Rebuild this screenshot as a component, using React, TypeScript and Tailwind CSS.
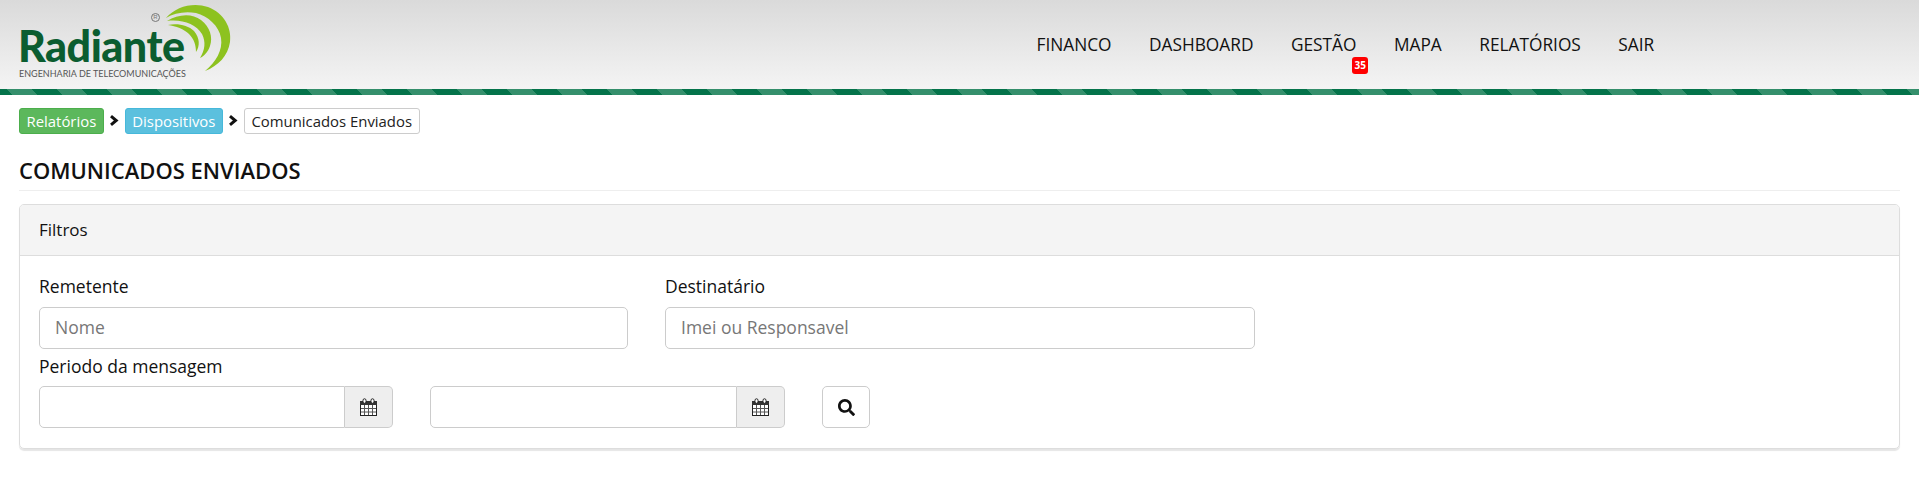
import { FaSearch } from "react-icons/fa";

function Cal() {
  return (
    <svg width="17" height="18" viewBox="0 0 17 18" className="block">
      <rect x="0.5" y="3.5" width="16" height="14" fill="#fff" stroke="#222" />
      <rect x="0" y="3" width="17" height="4" fill="#333" />
      <rect x="3" y="0.8" width="3" height="4.5" rx="1.5" fill="#fff" stroke="#222" />
      <rect x="11" y="0.8" width="3" height="4.5" rx="1.5" fill="#fff" stroke="#222" />
      <path d="M4.5 7v10M8.5 7v10M12.5 7v10M1 10.5h15M1 14h15" stroke="#555" strokeWidth="1" fill="none" />
    </svg>
  );
}

function Chevron() {
  return (
    <svg width="10" height="11" viewBox="0 0 10 11" className="block mb-[2px] shrink-0 mx-[5.5px]">
      <path d="M2 1.2 L7.2 5.5 L2 9.8" fill="none" stroke="#111" strokeWidth="3" />
    </svg>
  );
}

function Logo() {
  return (
    <div className="relative w-[240px] h-[89px] shrink-0">
      <svg width="90" height="80" viewBox="0 0 90 80" className="absolute left-[150px] top-0">
        <path d="M16 18 C26 6 44 2 58 7 C74 13 82 28 80 42 C78 56 68 66 55 71 C66 62 73 50 71 38 C69 26 58 16 46 13 C35 11 24 13 16 18Z" fill="#8dc21f" />
        <path d="M17 21 C28 14 42 13 51 20 C60 27 63 37 60 46 C58 52 54 56 50 58 C55 50 56 42 52 34 C46 24 32 19 17 21Z" fill="#8dc21f" />
        <path d="M18 25 C27 23 38 25 44 31 C50 38 50 46 46 52 C46 45 44 39 39 34 C34 29 26 26 18 25 Z" fill="#8dc21f" />
      </svg>
      <span className="absolute left-[18px] top-[26px] font-['Lato',sans-serif] font-black text-[43px] leading-[40px] tracking-[-0.5px] text-[#0b5d30]">Radiante</span>
      <span className="absolute left-[19px] top-[68px] font-['Lato',sans-serif] text-[9px] leading-[11px] whitespace-nowrap text-[#555]">ENGENHARIA DE TELECOMUNICAÇÕES</span>
      <span className="absolute left-[151px] top-[13px] w-[9px] h-[9px] rounded-full border border-[#777] text-[6px] leading-[7px] text-center text-[#777] font-['Liberation_Sans',sans-serif]">R</span>
    </div>
  );
}

const nav = ["FINANCO", "DASHBOARD", "GESTÃO", "MAPA", "RELATÓRIOS", "SAIR"];

export default function App() {
  return (
    <div className="min-h-[490px] bg-white font-['Open_Sans',sans-serif] text-[#111]">
      <header className="h-[95px] flex flex-col">
        <div className="h-[89px] flex items-start justify-between bg-gradient-to-b from-[#dadada] to-[#f4f4f4] pr-[246px]">
          <Logo />
          <nav className="flex pt-[33px]">
            {nav.map((n) => (
              <div key={n} className="relative px-[18.75px] text-[17.3px] leading-[24px] text-[#111]">
                {n}
                {n === "GESTÃO" && (
                  <span className="absolute right-[7px] top-[24px] w-[16px] h-[17px] rounded-[3px] bg-[#f00] text-white text-[10px] leading-[17px] text-center font-bold">35</span>
                )}
              </div>
            ))}
          </nav>
        </div>
        <div className="h-[6px] bg-[repeating-linear-gradient(50deg,#04734a_0,#04734a_9.26px,#358f6c_9.26px,#358f6c_28.41px,#04734a_28.41px,#04734a_38.3px)]" />
      </header>

      <main className="px-[19px] pt-[13px]">
        <div className="flex items-center h-[26px] text-[14.9px]">
          <span className="h-[26px] px-[6.5px] rounded-[3px] border border-[#4cae4c] bg-[#5cb85c] text-white leading-[24px]">Relatórios</span>
          <Chevron />
          <span className="h-[26px] px-[6.5px] rounded-[3px] border border-[#46b8da] bg-[#5bc0de] text-white leading-[24px]">Dispositivos</span>
          <Chevron />
          <span className="h-[26px] px-[6.5px] rounded-[3px] border border-[#ccc] bg-white text-[#222] leading-[24px]">Comunicados Enviados</span>
        </div>

        <h1 className="mt-[22px] h-[35px] text-[22px] leading-[29px] font-semibold border-b border-[#eee] text-[#111]">COMUNICADOS ENVIADOS</h1>

        <section className="mt-[13px] h-[245px] rounded-[5px] border border-[#ddd] shadow-[0_2px_1px_rgba(0,0,0,0.1)]">
          <div className="h-[51px] px-[19px] flex items-center bg-[#f4f4f4] border-b border-[#ddd] rounded-t-[4px] text-[17px]">Filtros</div>
          <div className="px-[19px] pt-[19px]">
            <div className="flex gap-[37px]">
              <label className="block w-[589px]">
                <span className="block text-[17.5px] font-medium leading-[22px] mb-[10px]">Remetente</span>
                <input placeholder="Nome" className="block w-full h-[42px] px-[15px] pb-[2px] rounded-[5px] border border-[#ccc] text-[17.5px] placeholder:text-[#777] outline-none" />
              </label>
              <label className="block w-[590px]">
                <span className="block text-[17.5px] font-medium leading-[22px] mb-[10px]">Destinatário</span>
                <input placeholder="Imei ou Responsavel" className="block w-full h-[42px] px-[15px] pb-[2px] rounded-[5px] border border-[#ccc] text-[17.5px] placeholder:text-[#777] outline-none" />
              </label>
            </div>
            <div className="mt-[6px] text-[17.5px] font-medium leading-[22px] mb-[9px]">Periodo da mensagem</div>
            <div className="flex">
              <div className="flex w-[354px] h-[42px]">
                <input className="flex-1 min-w-0 h-full rounded-l-[5px] border border-[#ccc] outline-none" />
                <span className="w-[48px] h-full flex items-center justify-center bg-[#eee] border border-l-0 border-[#ccc] rounded-r-[5px]"><Cal /></span>
              </div>
              <div className="flex w-[355px] h-[42px] ml-[37px]">
                <input className="flex-1 min-w-0 h-full rounded-l-[5px] border border-[#ccc] outline-none" />
                <span className="w-[48px] h-full flex items-center justify-center bg-[#eee] border border-l-0 border-[#ccc] rounded-r-[5px]"><Cal /></span>
              </div>
              <button className="ml-[37px] w-[48px] h-[42px] flex items-center justify-center rounded-[5px] border border-[#ccc] bg-white text-[#111]"><FaSearch size={17} /></button>
            </div>
          </div>
        </section>
      </main>
    </div>
  );
}
